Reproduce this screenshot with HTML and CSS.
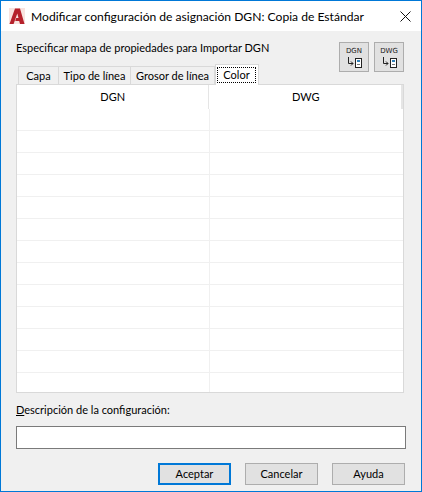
FILE: index.html
```html
<!DOCTYPE html>
<html lang="es">
  <head>
    <meta charset="UTF-8" />
    <title>Modificar configuración de asignación DGN</title>
    <link rel="stylesheet" href="styles.css">
  </head>
  <body>
    <div class="window">
      <div class="titlebar">
        <svg class="logo" width="16" height="16" viewBox="0 0 16 16">
          <rect width="16" height="16" fill="#f8e3df" />
          <path d="M0.5 16 L6 0.5 H11 L15.5 16 H11 L10.2 13 H6.2 L7.2 10 H9.5 L8.3 5.5 L4.6 16 Z" fill="#b5212b" />
        </svg>
        <div class="title">Modificar configuración de asignación DGN: Copia de Estándar</div>
        <svg class="close" width="11" height="11" viewBox="0 0 11 11">
          <path d="M0.5 0.5 L10.5 10.5 M10.5 0.5 L0.5 10.5" stroke="#111" stroke-width="1" fill="none" />
        </svg>
      </div>
      <div class="content">
        <div class="top">
          <div class="label">Especificar mapa de propiedades para Importar DGN</div>
          <div class="tools">
            <div class="tool">
              <div class="tool-name">DGN</div>
              <svg width="18" height="11" viewBox="0 0 18 11">
                <path d="M3.5 0 V6.5 H8 M6 4.5 L8 6.5 L6 8.5" stroke="#222" fill="none" />
                <rect x="10.5" y="1.5" width="6" height="9" fill="#fff" stroke="#222" />
                <rect x="12" y="3" width="3" height="2" fill="#2f7fb8" />
                <path d="M12 7.5 H15" stroke="#777" />
              </svg>
            </div>
            <div class="tool">
              <div class="tool-name">DWG</div>
              <svg width="18" height="11" viewBox="0 0 18 11">
                <path d="M3.5 0 V6.5 H8 M6 4.5 L8 6.5 L6 8.5" stroke="#222" fill="none" />
                <rect x="10.5" y="1.5" width="6" height="9" fill="#fff" stroke="#222" />
                <rect x="12" y="3" width="3" height="2" fill="#2f7fb8" />
                <path d="M12 7.5 H15" stroke="#777" />
              </svg>
            </div>
          </div>
        </div>
        <div class="tabs">
          <div class="tab tab-capa">Capa</div>
          <div class="tab tab-tipo">Tipo de línea</div>
          <div class="tab tab-grosor">Grosor de línea</div>
          <div class="tab active"><span class="focus">Color</span></div>
        </div>
        <div class="table">
          <div class="row head">
            <div class="cell">DGN</div>
            <div class="cell">DWG</div>
          </div>
          <div class="row"><div class="cell"></div><div class="cell"></div></div>
          <div class="row"><div class="cell"></div><div class="cell"></div></div>
          <div class="row"><div class="cell"></div><div class="cell"></div></div>
          <div class="row"><div class="cell"></div><div class="cell"></div></div>
          <div class="row"><div class="cell"></div><div class="cell"></div></div>
          <div class="row"><div class="cell"></div><div class="cell"></div></div>
          <div class="row"><div class="cell"></div><div class="cell"></div></div>
          <div class="row"><div class="cell"></div><div class="cell"></div></div>
          <div class="row"><div class="cell"></div><div class="cell"></div></div>
          <div class="row"><div class="cell"></div><div class="cell"></div></div>
          <div class="row"><div class="cell"></div><div class="cell"></div></div>
          <div class="row"><div class="cell"></div><div class="cell"></div></div>
          <div class="row"><div class="cell"></div><div class="cell"></div></div>
        </div>
        <div class="desc-label"><u>D</u>escripción de la configuración:</div>
        <div class="desc-input"></div>
        <div class="buttons">
          <div class="btn default">Aceptar</div>
          <div class="btn">Cancelar</div>
          <div class="btn">Ayuda</div>
        </div>
      </div>
    </div>
  </body>
</html>
```

FILE: styles.css
```css
* {
  margin: 0;
  padding: 0;
  box-sizing: border-box;
}
html,
body {
  width: 422px;
  height: 492px;
  overflow: hidden;
}
body {
  font-family: "Lato", "Open Sans", sans-serif;
  font-size: 11px;
  color: #000;
}
.window {
  width: 422px;
  height: 492px;
  border: 1px solid #0078d7;
  background: #f0f0f0;
  display: flex;
  flex-direction: column;
}
.titlebar {
  height: 30px;
  background: #fff;
  display: flex;
  align-items: center;
  padding: 0 10px 0 8px;
  flex: none;
}
.logo {
  flex: none;
  margin-right: 6px;
}
.close {
  flex: none;
}
.title {
  flex: 1;
  font-size: 12.1px;
  white-space: nowrap;
}
.content {
  flex: 1;
  padding: 8px 15px 0 15px;
}
.top {
  display: flex;
  justify-content: space-between;
  height: 27px;
}
.label {
  line-height: 18px;
}
.tools {
  display: flex;
  gap: 5px;
  padding-top: 3px;
  margin-right: 2px;
  height: 33px;
}
.tool {
  width: 30px;
  height: 30px;
  border: 1px solid #adadad;
  background: #e1e1e1;
  display: flex;
  flex-direction: column;
  align-items: center;
}
.tool-name {
  font-family: "DejaVu Sans", sans-serif;
  font-size: 7px;
  line-height: 9px;
  margin-top: 4px;
  margin-bottom: 1px;
  color: #222;
}
.tabs {
  display: flex;
  height: 18px;
  padding-left: 2px;
}
.tab {
  height: 18px;
  line-height: 17px;
  text-align: center;
  background: #f0f0f0;
  border: 1px solid #d9d9d9;
  border-left: 0;
  border-bottom: 0;
  white-space: nowrap;
}
.tab-capa {
  width: 41px;
  border-left: 1px solid #d9d9d9;
}
.tab-tipo {
  width: 72px;
}
.tab-grosor {
  width: 84px;
}
.tab.active {
  width: 44px;
  background: #fff;
  height: 21px;
  margin-top: -2px;
  padding: 2px 2px 0 1px;
  border-left: 1px solid #d9d9d9;
  position: relative;
  z-index: 1;
}
.focus {
  display: block;
  line-height: 14px;
  height: 16px;
  border: 1px dotted #000;
}
.table {
  width: 388px;
  height: 309px;
  background: #fff;
  border: 1px solid #d9d9d9;
  overflow: hidden;
}
.row {
  display: flex;
  height: 22px;
  border-bottom: 1px solid #f0f0f0;
}
.row.head {
  height: 24px;
  border-bottom: 0;
  border-right: 2px solid #e5e5e5;
}
.cell {
  width: 193px;
  border-right: 1px solid #f0f0f0;
  text-align: center;
}
.head .cell {
  line-height: 24px;
}
.head .cell:first-child {
  width: 192px;
  padding-left: 1px;
  border-right: 1px solid #e5e5e5;
}
.head .cell:last-child {
  padding-left: 2px;
}
.row .cell:last-child {
  border-right: 0;
}
.desc-label {
  margin-top: 8px;
  height: 17px;
  line-height: 17px;
}
.desc-input {
  width: 390px;
  height: 23px;
  margin-top: 8px;
  background: #fff;
  border: 1px solid #7a7a7a;
}
.buttons {
  display: flex;
  justify-content: flex-end;
  gap: 14px;
  margin-top: 14px;
  padding-right: 1px;
}
.btn {
  width: 73px;
  height: 22px;
  border: 1px solid #adadad;
  background: #e1e1e1;
  text-align: center;
  line-height: 20px;
}
.btn.default {
  border: 2px solid #0078d7;
  line-height: 18px;
}
```
